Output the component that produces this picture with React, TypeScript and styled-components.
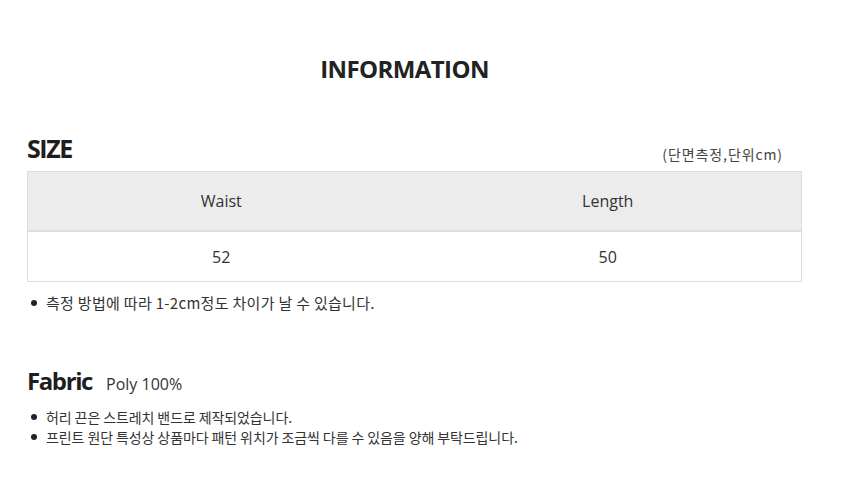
import styled, {createGlobalStyle} from "styled-components";

const GlobalStyle = createGlobalStyle`
    html, body {
        margin: 0;
        padding: 0;
        background: #fff;
    }

    body {
        font-family: "Open Sans", "Noto Sans CJK KR", sans-serif;
        color: #333;
    }
`

const SPage = styled.div`
    width: 860px;
    height: 500px;
    box-sizing: border-box;
    padding: 53px 58px 0 27px;
`

const STitle = styled.h1`
    margin: 0 0 48px;
    padding-right: 20px;
    text-align: center;
    font-size: 24px;
    line-height: 32px;
    font-weight: 700;
    letter-spacing: -0.6px;
    color: #222;
`

const SSectionHead = styled.div`
    display: flex;
    justify-content: space-between;
    align-items: flex-end;
    margin-bottom: 8px;
`

const SHeading = styled.h2<{ $size?: number }>`
    margin: 0;
    font-size: ${({$size}) => $size ?? 25}px;
    line-height: 30px;
    font-weight: 700;
    letter-spacing: -1.4px;
    color: #1e1e1e;
`

const SUnit = styled.span`
    font-family: "Noto Sans CJK KR", sans-serif;
    font-size: 14px;
    color: #444;
    margin-right: 19px;
    margin-bottom: -1px;
    letter-spacing: 0.9px;
`

const STable = styled.div`
    display: grid;
    grid-template-columns: 1fr 1fr;
    border: 1px solid #dcdcdc;
`

const SCell = styled.div<{ $head?: boolean }>`
    display: flex;
    align-items: center;
    justify-content: center;
    height: ${({$head}) => $head ? '58px' : '49px'};
    background: ${({$head}) => $head ? '#ececec' : '#fff'};
    border-bottom: ${({$head}) => $head ? '2px solid #dcdcdc' : 'none'};
    font-size: 16px;
    color: #333;
`

const SList = styled.ul<{ $size?: number, $spacing?: number }>`
    list-style: none;
    margin: 0;
    padding: 0 0 0 4px;
    font-family: "Noto Sans CJK KR", sans-serif;
    font-size: ${({$size}) => $size ?? 14}px;
    color: #333;
    letter-spacing: ${({$spacing}) => $spacing ?? 0}px;
`

const SItem = styled.li`
    display: flex;
    align-items: center;
    gap: 9px;
    line-height: 20px;

    &::before {
        content: "";
        width: 6px;
        height: 6px;
        border-radius: 50%;
        background: #222;
        flex: none;
    }
`

const SNote = styled.div`
    margin-top: 11px;
`

const SFabric = styled.div`
    display: flex;
    align-items: baseline;
    gap: 14px;
    margin-top: 53px;
    margin-bottom: 11px;
`

const SFabricValue = styled.span`
    font-size: 16px;
    color: #333;
`

const sizes = [
    {label: 'Waist', value: '52'},
    {label: 'Length', value: '50'},
]

export default function App() {
    return (<>
        <GlobalStyle/>
        <SPage>
            <STitle>INFORMATION</STitle>

            <SSectionHead>
                <SHeading>SIZE</SHeading>
                <SUnit>(단면측정,단위cm)</SUnit>
            </SSectionHead>

            <STable>
                {sizes.map(s => <SCell key={s.label} $head>{s.label}</SCell>)}
                {sizes.map(s => <SCell key={s.label}>{s.value}</SCell>)}
            </STable>

            <SNote>
                <SList $size={15} $spacing={0.3}>
                    <SItem>측정 방법에 따라 1-2cm정도 차이가 날 수 있습니다.</SItem>
                </SList>
            </SNote>

            <SFabric>
                <SHeading $size={24}>Fabric</SHeading>
                <SFabricValue>Poly 100%</SFabricValue>
            </SFabric>

            <SList $size={14} $spacing={-0.1}>
                <SItem>허리 끈은 스트레치 밴드로 제작되었습니다.</SItem>
                <SItem>프린트 원단 특성상 상품마다 패턴 위치가 조금씩 다를 수 있음을 양해 부탁드립니다.</SItem>
            </SList>
        </SPage>
    </>)
}
